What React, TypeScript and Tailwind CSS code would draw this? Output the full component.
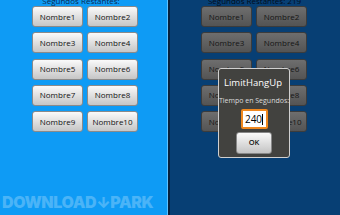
import React from 'react';

const names = ['Nombre1', 'Nombre2', 'Nombre3', 'Nombre4', 'Nombre5', 'Nombre6', 'Nombre7', 'Nombre8', 'Nombre9', 'Nombre10'];

const font = { fontFamily: '"Open Sans", "Noto Sans", sans-serif' };

const ButtonGrid: React.FC<{ dim?: boolean }> = ({ dim }) => (
  <div className="grid grid-cols-[51px_51px] gap-x-[4px] gap-y-[5.3px]">
    {names.map((n) => (
      <div
        key={n}
        className={
          dim
            ? 'h-[21px] rounded-[3px] border border-[#3c3c3c] bg-gradient-to-b from-[#6e6e6e] to-[#545454] flex items-center justify-center text-[8px] font-medium text-[#151515]'
            : 'h-[21px] rounded-[3px] border border-[#8a8a8a] bg-gradient-to-b from-[#fafafa] to-[#c6c6c6] flex items-center justify-center text-[8px] font-medium text-[#111]'
        }
      >
        {n}
      </div>
    ))}
  </div>
);

export default function App() {
  return (
    <div className="w-[340px] h-[215px] flex overflow-hidden" style={font}>
      <div className="w-[167px] h-full bg-[#0e9bf5] pl-[32px] flex flex-col relative">
        <div className="h-[6px] leading-[1px] text-[8px] text-[#0b2a52] w-[98px] text-center">Segundos Restantes:</div>
        <ButtonGrid />
        <div className="mt-auto mb-[5px] -ml-[30px] text-[16px] font-black tracking-[-0.4px] text-white/25 leading-none whitespace-nowrap" style={{ fontFamily: 'Inter, sans-serif' }}>
          DOWNLOAD<span className="text-[15px]">↓</span>PARK
        </div>
      </div>
      <div className="w-[1px] h-full bg-[#5ec2ff]" />
      <div className="w-[2px] h-full bg-[#06203d]" />
      <div className="flex-1 h-full bg-[#073f74] pl-[31px] flex flex-col relative">
        <div className="h-[6px] leading-[1px] text-[8px] text-[#020d1c] w-[107px] text-center">Segundos Restantes: 219</div>
        <ButtonGrid dim />
        <div className="absolute left-[48px] top-[68px] w-[72px] h-[90px] rounded-[3px] border border-[#d0d0d0] bg-[#42423f] overflow-hidden flex flex-col items-center">
          <div className="self-start pl-[5px] pt-[7px] text-[9.5px] text-white leading-[13px]">LimitHangUp</div>
          <div className="mt-[7px] text-[7px] text-[#dcdcdc] leading-[9px] whitespace-nowrap">Tiempo en Segundos:</div>
          <div className="mt-[4px] w-[27px] h-[20px] rounded-[2px] border-2 border-[#f0881e] bg-white flex items-center justify-center text-[10px] text-black leading-none">
            240<span className="w-[1px] h-[11px] bg-black" />
          </div>
          <div className="mt-[3px] w-[36px] h-[22px] rounded-[3px] border border-[#888] bg-gradient-to-b from-[#fafafa] to-[#c4c4c4] flex items-center justify-center text-[7.5px] font-semibold text-[#111]">
            OK
          </div>
        </div>
      </div>
    </div>
  );
}
